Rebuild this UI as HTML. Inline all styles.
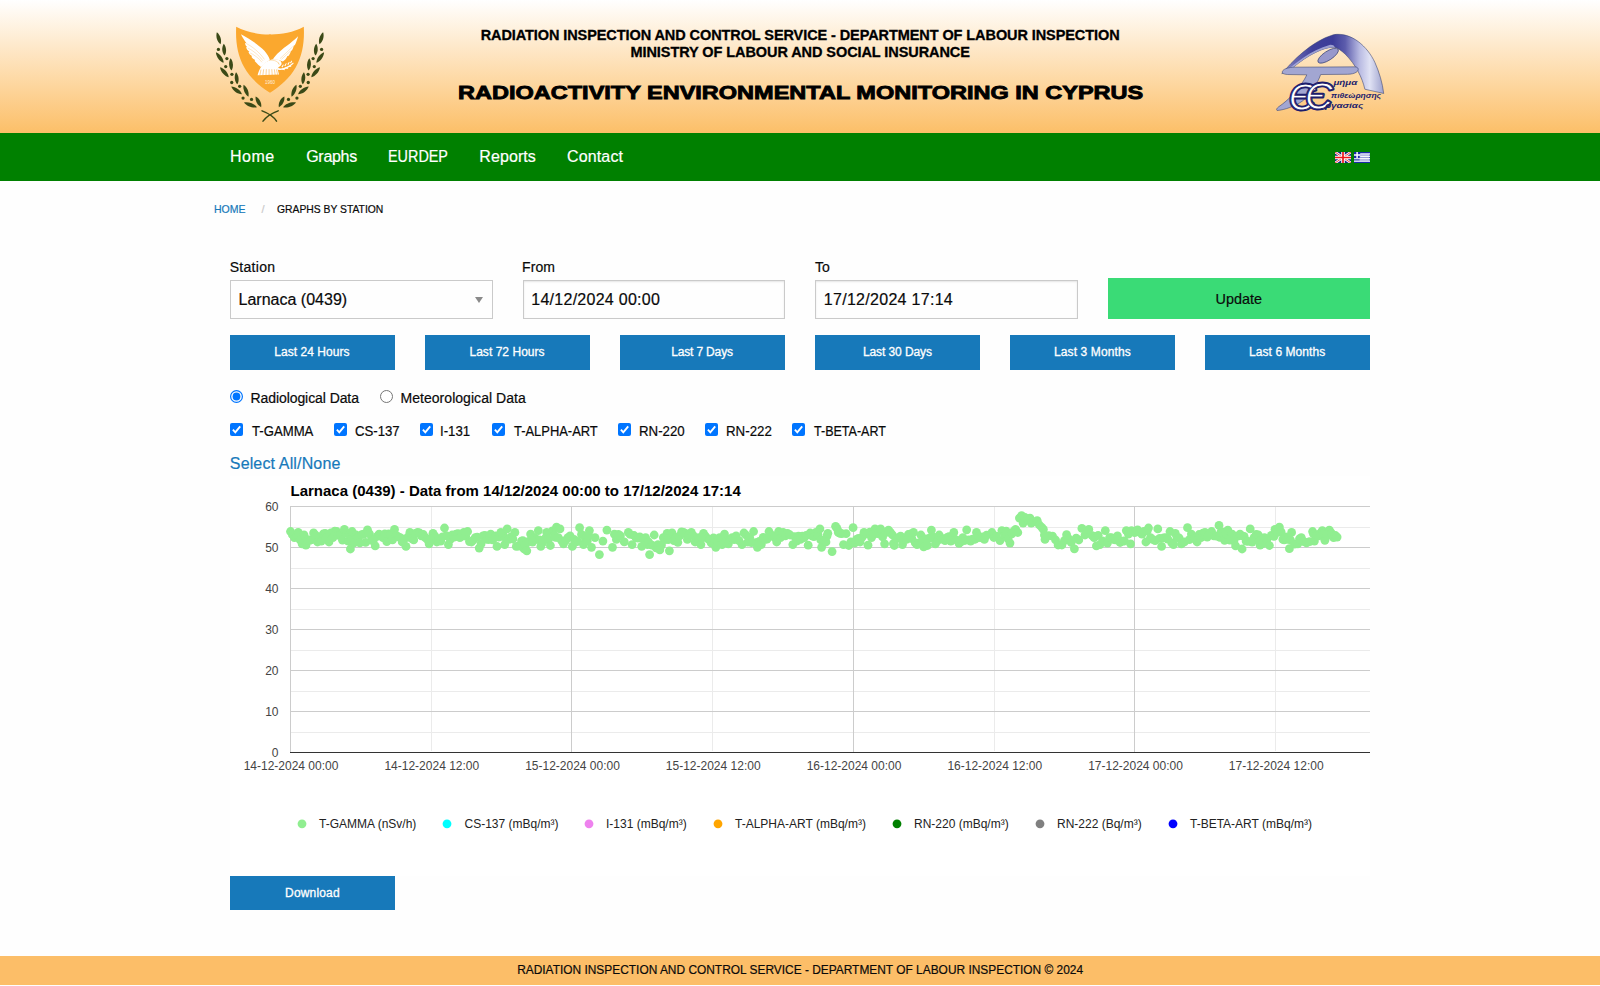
<!DOCTYPE html>
<html lang="en">
<head>
<meta charset="utf-8">
<title>Radioactivity Environmental Monitoring in Cyprus</title>
<style>
*{box-sizing:border-box}
html,body{margin:0;padding:0}
body{width:1600px;height:986px;overflow:hidden;background:#fefefe;font-family:"Liberation Sans",sans-serif;color:#0a0a0a;position:relative}
.abs{position:absolute}
#hdr{left:0;top:0;width:1600px;height:133px;background:linear-gradient(#ffffff,#fcbf68)}
#hdr .l1,#hdr .l2{position:absolute;left:0;width:1600px;text-align:center;font-weight:bold;font-size:14.5px;line-height:17px;color:#000;-webkit-text-stroke:0.3px #000;white-space:nowrap}
#hdr .l1{top:27px}
#hdr .l2{top:44px}
#hdr .ttl{position:absolute;left:0;width:1600px;top:79px;text-align:center;font-weight:bold;font-size:19.2px;line-height:28px;color:#000;white-space:nowrap}
#ttl{display:inline-block;transform:scaleX(1.225);transform-origin:50% 50%;-webkit-text-stroke:0.9px #000;position:relative;left:0.7px}
#nav{left:0;top:133px;width:1600px;height:47.5px;background:#008000}
#nav a{-webkit-text-stroke:0.2px #fff;position:absolute;top:0;line-height:47px;font-size:16px;color:#fff;text-decoration:none;white-space:nowrap}
.bc{top:202px;font-size:11px;line-height:14px;white-space:nowrap}
.lbl,.rl,.inp,.bc,#ftr,#upd,#sel{-webkit-text-stroke:0.2px currentColor}
.lbl{font-size:14px;line-height:18px;color:#0a0a0a;white-space:nowrap}
.inp{height:38.7px;width:262.5px;top:280.2px;border:1px solid #cacaca;background:#fefefe;font-size:16px;line-height:37px;padding-left:8px;color:#0a0a0a;box-shadow:inset 0 1px 2px rgba(10,10,10,.1);white-space:nowrap}
.btn{-webkit-text-stroke:0.3px #fefefe;background:#1779ba;color:#fefefe;text-align:center;white-space:nowrap}
.qb{top:335px;height:34.7px;width:165px;font-size:12px;line-height:34px}
.rl{font-size:14px;line-height:18px;white-space:nowrap;color:#0a0a0a}
#ftr{left:0;top:956px;width:1600px;height:28.6px;background:#fcbe68;text-align:center;font-size:12.6px;line-height:29px;color:#0a0a0a;white-space:nowrap}
</style>
</head>
<body>
<header id="hdr" class="abs">
<svg class="abs" style="left:200px;top:15px" width="140" height="115" viewBox="0 0 1200 986">
<path d="M310 100 C 400 150, 520 168, 600 166 C 680 168, 800 150, 890 100 C 896 230, 880 340, 820 450 C 770 540, 690 610, 600 666 C 510 610, 430 540, 380 450 C 320 340, 304 230, 310 100Z" fill="#fba82e"/>
<g transform="translate(308.6 94.3) scale(0.6085)">
<g fill="#ffffff">
<path d="M70 115 C 180 175, 330 270, 400 350 C 440 400, 465 440, 478 478 L 400 530 L 352 578 L 330 560 L 312 545 L 290 520 L 262 492 L 270 480 L 240 462 L 215 432 L 228 425 L 195 400 L 175 370 L 190 365 L 158 335 L 140 300 L 158 300 L 135 270 L 125 238 L 150 245 C 110 190, 85 150, 70 115Z"/>
<path d="M875 145 C 860 200, 845 240, 828 272 L 815 275 C 810 300, 800 325, 788 345 L 775 348 C 770 370, 755 400, 738 422 L 725 422 C 715 445, 705 460, 695 472 L 660 500 L 600 478 L 520 470 C 560 400, 640 330, 760 245 C 810 205, 850 170, 875 145Z"/>
<path d="M352 578 C 380 530, 440 490, 520 470 C 580 462, 632 480, 642 520 C 647 545, 628 562, 602 576 C 590 590, 586 602, 590 620 L 606 682 L 304 694 C 314 650, 334 610, 352 578Z"/>
<path d="M588 590 C 640 612, 730 585, 805 515 L 812 528 C 740 605, 640 635, 584 612Z"/>
<path d="M640 575 L 665 540 L 672 548 L 655 585Z M680 560 L 705 522 L 713 530 L 696 568Z M722 540 L 748 503 L 756 511 L 738 548Z M760 517 L 784 485 L 792 493 L 775 527Z"/>
<path d="M650 600 L 690 612 L 688 622 L 648 612Z M695 585 L 735 595 L 733 605 L 692 596Z M738 562 L 778 568 L 777 578 L 736 573Z"/>
</g>
<g stroke="#fba82e" fill="none">
<path stroke-width="7" d="M352 615 L 336 694 M390 610 L 378 694 M428 608 L 422 694 M466 608 L 466 694 M504 608 L 510 694 M540 610 L 552 692 M570 612 L 588 690"/>
<path stroke-width="5" d="M470 482 C 540 476, 596 500, 612 548"/>
<path stroke-width="4" d="M150 250 C 230 290, 330 370, 400 470 M165 310 C 240 345, 320 410, 380 490 M200 380 C 260 410, 320 450, 365 510 M800 290 C 740 350, 680 400, 620 460 M765 355 C 720 400, 680 430, 640 470"/>
</g>
<circle cx="600" cy="522" r="6" fill="#fba82e"/>
</g>
<text x="600" y="592" font-family="Liberation Sans, sans-serif" font-size="38" fill="#fff" text-anchor="middle" opacity="0.85">1960</text>
<g fill="#3b4a17"><path transform="translate(160.1 199.2) rotate(-17)" d="M0 -53.5 C 21.7 -23.54, 21.7 26.75, 0 53.5 C -21.7 26.75, -21.7 -23.54, 0 -53.5Z"/><path transform="translate(207 297) rotate(-4)" d="M0 -51.0 C 21.7 -22.44, 21.7 25.5, 0 51.0 C -21.7 25.5, -21.7 -22.44, 0 -51.0Z"/><path transform="translate(169.4 365.1) rotate(-36)" d="M0 -56.0 C 21.7 -24.64, 21.7 28.0, 0 56.0 C -21.7 28.0, -21.7 -24.64, 0 -56.0Z"/><path transform="translate(265.7 423.8) rotate(-4)" d="M0 -53.0 C 21.7 -23.32, 21.7 26.5, 0 53.0 C -21.7 26.5, -21.7 -23.32, 0 -53.0Z"/><path transform="translate(208.6 490.4) rotate(-41)" d="M0 -56.5 C 21.7 -24.86, 21.7 28.25, 0 56.5 C -21.7 28.25, -21.7 -24.86, 0 -56.5Z"/><path transform="translate(314.2 542.8) rotate(-6)" d="M0 -52.0 C 21.7 -22.88, 21.7 26.0, 0 52.0 C -21.7 26.0, -21.7 -22.88, 0 -52.0Z"/><path transform="translate(313.5 646.9) rotate(-54)" d="M0 -56.5 C 21.7 -24.86, 21.7 28.25, 0 56.5 C -21.7 28.25, -21.7 -24.86, 0 -56.5Z"/><path transform="translate(394.1 649.2) rotate(-22)" d="M0 -55.0 C 21.7 -24.2, 21.7 27.5, 0 55.0 C -21.7 27.5, -21.7 -24.2, 0 -55.0Z"/><path transform="translate(432.4 769.8) rotate(-70)" d="M0 -59.5 C 21.7 -26.18, 21.7 29.75, 0 59.5 C -21.7 29.75, -21.7 -26.18, 0 -59.5Z"/><path transform="translate(500.5 744.7) rotate(-27.5)" d="M0 -51.0 C 21.7 -22.44, 21.7 25.5, 0 51.0 C -21.7 25.5, -21.7 -22.44, 0 -51.0Z"/><circle cx="157.7" cy="295.5" r="14"/><circle cx="230.5" cy="373.7" r="14"/><circle cx="220.3" cy="441.8" r="14"/><circle cx="273.5" cy="508.4" r="14"/><circle cx="272" cy="578.8" r="14"/><circle cx="340" cy="611.7" r="14"/><circle cx="369" cy="711.9" r="14"/><circle cx="441.8" cy="723.6" r="14"/></g>
<g fill="#3b4a17" transform="translate(1200 0) scale(-1 1)"><path transform="translate(160.1 199.2) rotate(-17)" d="M0 -53.5 C 21.7 -23.54, 21.7 26.75, 0 53.5 C -21.7 26.75, -21.7 -23.54, 0 -53.5Z"/><path transform="translate(207 297) rotate(-4)" d="M0 -51.0 C 21.7 -22.44, 21.7 25.5, 0 51.0 C -21.7 25.5, -21.7 -22.44, 0 -51.0Z"/><path transform="translate(169.4 365.1) rotate(-36)" d="M0 -56.0 C 21.7 -24.64, 21.7 28.0, 0 56.0 C -21.7 28.0, -21.7 -24.64, 0 -56.0Z"/><path transform="translate(265.7 423.8) rotate(-4)" d="M0 -53.0 C 21.7 -23.32, 21.7 26.5, 0 53.0 C -21.7 26.5, -21.7 -23.32, 0 -53.0Z"/><path transform="translate(208.6 490.4) rotate(-41)" d="M0 -56.5 C 21.7 -24.86, 21.7 28.25, 0 56.5 C -21.7 28.25, -21.7 -24.86, 0 -56.5Z"/><path transform="translate(314.2 542.8) rotate(-6)" d="M0 -52.0 C 21.7 -22.88, 21.7 26.0, 0 52.0 C -21.7 26.0, -21.7 -22.88, 0 -52.0Z"/><path transform="translate(313.5 646.9) rotate(-54)" d="M0 -56.5 C 21.7 -24.86, 21.7 28.25, 0 56.5 C -21.7 28.25, -21.7 -24.86, 0 -56.5Z"/><path transform="translate(394.1 649.2) rotate(-22)" d="M0 -55.0 C 21.7 -24.2, 21.7 27.5, 0 55.0 C -21.7 27.5, -21.7 -24.2, 0 -55.0Z"/><path transform="translate(432.4 769.8) rotate(-70)" d="M0 -59.5 C 21.7 -26.18, 21.7 29.75, 0 59.5 C -21.7 29.75, -21.7 -26.18, 0 -59.5Z"/><path transform="translate(500.5 744.7) rotate(-27.5)" d="M0 -51.0 C 21.7 -22.44, 21.7 25.5, 0 51.0 C -21.7 25.5, -21.7 -22.44, 0 -51.0Z"/><circle cx="157.7" cy="295.5" r="14"/><circle cx="230.5" cy="373.7" r="14"/><circle cx="220.3" cy="441.8" r="14"/><circle cx="273.5" cy="508.4" r="14"/><circle cx="272" cy="578.8" r="14"/><circle cx="340" cy="611.7" r="14"/><circle cx="369" cy="711.9" r="14"/><circle cx="441.8" cy="723.6" r="14"/></g>
<g stroke="#3b4a17" fill="none" stroke-linecap="round"><path d="M532 822 C 580 840, 630 870, 656 910" stroke-width="13"/><path d="M670 822 C 620 840, 570 870, 540 910" stroke-width="13"/></g>
</svg>
<div class="l1"><span id="l1" style="letter-spacing:-0.086px;position:relative;left:0.12px">RADIATION INSPECTION AND CONTROL SERVICE - DEPARTMENT OF LABOUR INSPECTION</span></div>
<div class="l2"><span id="l2" style="letter-spacing:-0.079px;position:relative;left:0.19px">MINISTRY OF LABOUR AND SOCIAL INSURANCE</span></div>
<div class="ttl"><span id="ttl">RADIOACTIVITY ENVIRONMENTAL MONITORING IN CYPRUS</span></div>
<svg class="abs" style="left:1260px;top:20px" width="140" height="105" viewBox="0 0 1315 986">
<defs>
<linearGradient id="ag" gradientUnits="userSpaceOnUse" x1="205" y1="0" x2="1165" y2="0">
<stop offset="0" stop-color="#a4a4d6"/><stop offset="0.12" stop-color="#6868b2"/><stop offset="0.3" stop-color="#40409a"/><stop offset="0.5" stop-color="#3c3c98"/><stop offset="0.62" stop-color="#5c5cac"/><stop offset="0.76" stop-color="#b8bae2"/><stop offset="0.86" stop-color="#e0e2f4"/><stop offset="1" stop-color="#9ca0cc"/>
</linearGradient>
</defs>
<path d="M205 505 C 300 390, 480 200, 690 138 C 860 110, 1010 250, 1080 400 C 1120 490, 1150 590, 1162 690 L 985 650 C 960 540, 900 420, 800 320 C 760 285, 730 262, 700 255 C 600 250, 450 330, 310 445 Z" fill="url(#ag)" stroke="#2e3a6e" stroke-width="5"/>
<path d="M222 498 C 320 415, 470 285, 660 232 C 690 232, 702 242, 700 255 C 600 250, 450 330, 310 445 Z" fill="#b4b6e0" opacity="0.8"/>
<ellipse cx="640" cy="335" rx="112" ry="42" transform="rotate(-33 640 335)" fill="#9898cc" stroke="#2e3a6e" stroke-width="6"/>
<path d="M215 475 C 230 455, 280 445, 320 443 L 890 440 C 925 440, 935 470, 905 490 C 880 505, 860 508, 820 510 L 570 512 C 540 600, 470 700, 400 760 C 330 810, 230 845, 160 850 C 150 840, 160 828, 175 815 C 260 760, 380 640, 440 515 L 260 512 C 215 510, 200 495, 215 475Z" fill="#a2a6d2" stroke="#2e3a6e" stroke-width="5"/>
<g font-family="Liberation Sans, sans-serif" font-style="italic" fill="#1c1c6c" stroke="#1c1c6c" stroke-width="28" stroke-linejoin="round" font-size="349">
<text x="272" y="842" textLength="250" lengthAdjust="spacingAndGlyphs">Є</text>
<text x="425" y="838" textLength="258" lengthAdjust="spacingAndGlyphs">Є</text>
</g>
<g font-family="Liberation Sans, sans-serif" font-style="italic" fill="#ffffff" stroke="#1c1c6c" stroke-width="8" font-size="349">
<text x="272" y="842" textLength="250" lengthAdjust="spacingAndGlyphs">Є</text>
<text x="425" y="838" textLength="258" lengthAdjust="spacingAndGlyphs">Є</text>
</g>
<g font-family="Liberation Sans, sans-serif" font-weight="bold" font-style="italic" fill="#1c1c6c" font-size="62">
<text x="690" y="612" textLength="225" lengthAdjust="spacingAndGlyphs">μήμα</text>
<text x="668" y="728" textLength="470" lengthAdjust="spacingAndGlyphs">πιθεώρησης</text>
<text x="610" y="826" textLength="360" lengthAdjust="spacingAndGlyphs">ργασίας</text>
</g>
</svg>
</header>
<nav id="nav" class="abs">
<a id="n1" style="letter-spacing:0.467px;margin-left:-1.0px;left:231px">Home</a>
<a id="n2" style="letter-spacing:-0.29px;margin-left:0.2px;left:306px">Graphs</a>
<a id="n3" style="letter-spacing:0px;margin-left:-1.34px;display:inline-block;transform:scaleX(0.8992);transform-origin:0 50%;left:389px">EURDEP</a>
<a id="n4" style="letter-spacing:0.067px;margin-left:-0.65px;left:480px">Reports</a>
<a id="n5" style="letter-spacing:0.158px;margin-left:-0.59px;left:567.5px">Contact</a>
<svg class="abs" style="left:1335px;top:19px" width="16" height="11" viewBox="0 0 16 11"><rect width="16" height="11" fill="#1a237b"/><path d="M0 0L16 11M16 0L0 11" stroke="#fff" stroke-width="2.6"/><path d="M0 0L16 11M16 0L0 11" stroke="#e8262b" stroke-width="0.9"/><path d="M8 0V11M0 5.5H16" stroke="#fff" stroke-width="3.6"/><path d="M8 0V11M0 5.5H16" stroke="#f0161c" stroke-width="1.7"/></svg>
<svg class="abs" style="left:1354px;top:19px" width="16" height="11" viewBox="0 0 16 11"><rect width="16" height="11" fill="#1a2aa8"/><g fill="#fff"><rect x="0" y="1.3" width="16" height="1.2"/><rect x="0" y="3.7" width="16" height="1.2"/><rect x="0" y="6.1" width="16" height="1.2"/><rect x="0" y="8.5" width="16" height="1.3"/></g><rect x="0" y="0" width="6.2" height="6.1" fill="#1a2aa8"/><path d="M3.1 0V6.1M0 3.05H6.2" stroke="#fff" stroke-width="1.5"/><rect x="5.6" y="2" width="9.8" height="6.8" fill="#fff" opacity="0.55"/></svg>

</nav>
<div class="abs bc" id="b1" style="letter-spacing:0px;margin-left:-0.6px;display:inline-block;transform:scaleX(0.9563);transform-origin:0 50%;left:215px;color:#1779ba">HOME</div>
<div class="abs bc" style="left:261.6px;color:#cacaca">/</div>
<div class="abs bc" id="b3" style="letter-spacing:0px;margin-left:-0.48px;display:inline-block;transform:scaleX(0.9402);transform-origin:0 50%;left:277.5px;color:#0a0a0a">GRAPHS BY STATION</div>

<label class="abs lbl" id="lb1" style="letter-spacing:0.273px;margin-left:-0.25px;left:230px;top:258px">Station</label>
<label class="abs lbl" id="lb2" style="letter-spacing:0.106px;margin-left:-0.5px;left:522.5px;top:258px">From</label>
<label class="abs lbl" id="lb3" style="letter-spacing:0.0px;margin-left:0.0px;left:815px;top:258px">To</label>
<div class="abs inp" style="left:230px;box-shadow:none"><span id="i1" style="letter-spacing:0.007px;position:relative;left:-0.46px">Larnaca (0439)</span>
<svg class="abs" style="right:8.1px;top:15.9px" width="8" height="6" viewBox="0 0 8 6"><polygon points="0,0 8,0 4,6" fill="#8a8a8a"/></svg></div>
<div class="abs inp" style="left:522.5px"><span id="i2" style="letter-spacing:0.268px;position:relative;left:-0.25px">14/12/2024 00:00</span></div>
<div class="abs inp" style="left:815px"><span id="i3" style="letter-spacing:0.292px;position:relative;left:-0.2px">17/12/2024 17:14</span></div>
<div class="abs" style="left:1107.5px;top:278px;width:262.5px;height:40.7px;background:#3adb76;color:#0a0a0a;text-align:center;font-size:14.4px;line-height:42.6px"><span id="upd" style="letter-spacing:0.0px;position:relative;left:0.0px">Update</span></div>

<div class="abs btn qb" style="left:230px"><span id="q1" style="letter-spacing:0.049px;position:relative;left:-0.6px">Last 24 Hours</span></div>
<div class="abs btn qb" style="left:425px"><span id="q2" style="letter-spacing:0.038px;position:relative;left:-0.46px">Last 72 Hours</span></div>
<div class="abs btn qb" style="left:620px"><span id="q3" style="letter-spacing:-0.15px;position:relative;left:-0.53px">Last 7 Days</span></div>
<div class="abs btn qb" style="left:815px"><span id="q4" style="letter-spacing:-0.084px;position:relative;left:-0.1px">Last 30 Days</span></div>
<div class="abs btn qb" style="left:1010px"><span id="q5" style="letter-spacing:0.111px;position:relative;left:-0.12px">Last 3 Months</span></div>
<div class="abs btn qb" style="left:1205px"><span id="q6" style="letter-spacing:0.074px;position:relative;left:-0.33px">Last 6 Months</span></div>

<svg class="abs" style="left:230px;top:390.4px" width="13" height="13" viewBox="0 0 13 13"><circle cx="6.5" cy="6.5" r="5.9" fill="#fff" stroke="#0075ff" stroke-width="1.2"/><circle cx="6.5" cy="6.5" r="3.9" fill="#0075ff"/></svg>
<div class="abs rl" id="r1" style="letter-spacing:-0.078px;margin-left:-0.91px;left:251.4px;top:389px">Radiological Data</div>
<svg class="abs" style="left:380px;top:390.4px" width="13" height="13" viewBox="0 0 13 13"><circle cx="6.5" cy="6.5" r="6" fill="#fff" stroke="#767676" stroke-width="1"/></svg>
<div class="abs rl" id="r2" style="letter-spacing:0.041px;margin-left:-0.91px;left:401.4px;top:389px">Meteorological Data</div>

<svg class="abs" style="left:230px;top:423.2px" width="13" height="13" viewBox="0 0 13 13"><rect x="0" y="0" width="13" height="13" rx="2" fill="#0075ff"/><path d="M2.9 6.7 L5.3 9.3 L10.2 3.4" fill="none" stroke="#fff" stroke-width="1.9"/></svg>
<div class="abs rl" id="c0" style="letter-spacing:0px;margin-left:0.44px;display:inline-block;transform:scaleX(0.9394);transform-origin:0 50%;left:251.4px;top:422px">T-GAMMA</div>
<svg class="abs" style="left:334px;top:423.2px" width="13" height="13" viewBox="0 0 13 13"><rect x="0" y="0" width="13" height="13" rx="2" fill="#0075ff"/><path d="M2.9 6.7 L5.3 9.3 L10.2 3.4" fill="none" stroke="#fff" stroke-width="1.9"/></svg>
<div class="abs rl" id="c1" style="letter-spacing:0px;margin-left:-0.2px;display:inline-block;transform:scaleX(0.941);transform-origin:0 50%;left:355.4px;top:422px">CS-137</div>
<svg class="abs" style="left:420px;top:423.2px" width="13" height="13" viewBox="0 0 13 13"><rect x="0" y="0" width="13" height="13" rx="2" fill="#0075ff"/><path d="M2.9 6.7 L5.3 9.3 L10.2 3.4" fill="none" stroke="#fff" stroke-width="1.9"/></svg>
<div class="abs rl" id="c2" style="letter-spacing:0px;margin-left:-1.35px;display:inline-block;transform:scaleX(0.9419);transform-origin:0 50%;left:441.4px;top:422px">I-131</div>
<svg class="abs" style="left:492px;top:423.2px" width="13" height="13" viewBox="0 0 13 13"><rect x="0" y="0" width="13" height="13" rx="2" fill="#0075ff"/><path d="M2.9 6.7 L5.3 9.3 L10.2 3.4" fill="none" stroke="#fff" stroke-width="1.9"/></svg>
<div class="abs rl" id="c3" style="letter-spacing:0px;margin-left:0.25px;display:inline-block;transform:scaleX(0.9226);transform-origin:0 50%;left:513.4px;top:422px">T-ALPHA-ART</div>
<svg class="abs" style="left:618px;top:423.2px" width="13" height="13" viewBox="0 0 13 13"><rect x="0" y="0" width="13" height="13" rx="2" fill="#0075ff"/><path d="M2.9 6.7 L5.3 9.3 L10.2 3.4" fill="none" stroke="#fff" stroke-width="1.9"/></svg>
<div class="abs rl" id="c4" style="letter-spacing:0px;margin-left:-0.5px;display:inline-block;transform:scaleX(0.9485);transform-origin:0 50%;left:639.4px;top:422px">RN-220</div>
<svg class="abs" style="left:705px;top:423.2px" width="13" height="13" viewBox="0 0 13 13"><rect x="0" y="0" width="13" height="13" rx="2" fill="#0075ff"/><path d="M2.9 6.7 L5.3 9.3 L10.2 3.4" fill="none" stroke="#fff" stroke-width="1.9"/></svg>
<div class="abs rl" id="c5" style="letter-spacing:0px;margin-left:-0.5px;display:inline-block;transform:scaleX(0.9508);transform-origin:0 50%;left:726.4px;top:422px">RN-222</div>
<svg class="abs" style="left:792px;top:423.2px" width="13" height="13" viewBox="0 0 13 13"><rect x="0" y="0" width="13" height="13" rx="2" fill="#0075ff"/><path d="M2.9 6.7 L5.3 9.3 L10.2 3.4" fill="none" stroke="#fff" stroke-width="1.9"/></svg>
<div class="abs rl" id="c6" style="letter-spacing:0px;margin-left:0.25px;display:inline-block;transform:scaleX(0.8951);transform-origin:0 50%;left:813.4px;top:422px">T-BETA-ART</div>
<div class="abs" style="left:230px;top:455px;font-size:16px;line-height:18px;color:#1779ba;white-space:nowrap"><span id="sel" style="letter-spacing:0.143px;position:relative;left:-0.2px">Select All/None</span></div>

<svg class="abs" style="left:230px;top:476px" width="1140" height="400" viewBox="0 0 1140 400" font-family="Liberation Sans, Arial, sans-serif">
<rect x="0" y="0" width="1140" height="400" fill="#ffffff"/>
<text x="60.5" y="19.6" font-size="15" font-weight="bold" fill="#000">Larnaca (0439) - Data from 14/12/2024 00:00 to 17/12/2024 17:14</text>
<g><rect x="60" y="51" width="1080" height="1" fill="#ebebeb"/><rect x="60" y="92" width="1080" height="1" fill="#ebebeb"/><rect x="60" y="133" width="1080" height="1" fill="#ebebeb"/><rect x="60" y="174" width="1080" height="1" fill="#ebebeb"/><rect x="60" y="215" width="1080" height="1" fill="#ebebeb"/><rect x="60" y="256" width="1080" height="1" fill="#ebebeb"/><rect x="201" y="30" width="1" height="245" fill="#ebebeb"/><rect x="482" y="30" width="1" height="245" fill="#ebebeb"/><rect x="764" y="30" width="1" height="245" fill="#ebebeb"/><rect x="1045" y="30" width="1" height="245" fill="#ebebeb"/><rect x="60" y="30" width="1080" height="1" fill="#cccccc"/><rect x="60" y="71" width="1080" height="1" fill="#cccccc"/><rect x="60" y="112" width="1080" height="1" fill="#cccccc"/><rect x="60" y="153" width="1080" height="1" fill="#cccccc"/><rect x="60" y="194" width="1080" height="1" fill="#cccccc"/><rect x="60" y="235" width="1080" height="1" fill="#cccccc"/><rect x="60" y="30" width="1" height="246" fill="#cccccc"/><rect x="341" y="30" width="1" height="246" fill="#cccccc"/><rect x="623" y="30" width="1" height="246" fill="#cccccc"/><rect x="904" y="30" width="1" height="246" fill="#cccccc"/><rect x="60" y="276" width="1080" height="1" fill="#333333"/></g>
<g fill="#90ee90"><circle cx="60.5" cy="55.5" r="4.4"/><circle cx="62.4" cy="58.7" r="4.4"/><circle cx="64.4" cy="61.6" r="4.4"/><circle cx="66.3" cy="58.9" r="4.4"/><circle cx="68.2" cy="56.4" r="4.4"/><circle cx="70.1" cy="63.8" r="4.4"/><circle cx="72.1" cy="67.8" r="4.4"/><circle cx="74.0" cy="58.8" r="4.4"/><circle cx="75.9" cy="69.2" r="4.4"/><circle cx="77.8" cy="63.7" r="4.4"/><circle cx="79.8" cy="64.3" r="4.4"/><circle cx="81.7" cy="63.7" r="4.4"/><circle cx="83.6" cy="56.9" r="4.4"/><circle cx="85.5" cy="59.1" r="4.4"/><circle cx="87.5" cy="66.0" r="4.4"/><circle cx="89.4" cy="62.7" r="4.4"/><circle cx="91.3" cy="65.1" r="4.4"/><circle cx="93.2" cy="58.0" r="4.4"/><circle cx="95.2" cy="57.3" r="4.4"/><circle cx="97.1" cy="61.3" r="4.4"/><circle cx="99.0" cy="66.0" r="4.4"/><circle cx="100.9" cy="56.9" r="4.4"/><circle cx="102.9" cy="61.6" r="4.4"/><circle cx="104.8" cy="55.1" r="4.4"/><circle cx="106.7" cy="55.5" r="4.4"/><circle cx="108.6" cy="59.4" r="4.4"/><circle cx="110.6" cy="59.0" r="4.4"/><circle cx="112.5" cy="64.2" r="4.4"/><circle cx="114.4" cy="53.4" r="4.4"/><circle cx="116.3" cy="56.9" r="4.4"/><circle cx="118.3" cy="65.1" r="4.4"/><circle cx="119.3" cy="58.3" r="4.4"/><circle cx="120.4" cy="73.0" r="4.4"/><circle cx="121.2" cy="63.3" r="4.4"/><circle cx="122.1" cy="55.5" r="4.4"/><circle cx="124.0" cy="67.0" r="4.4"/><circle cx="126.0" cy="59.0" r="4.4"/><circle cx="127.9" cy="61.7" r="4.4"/><circle cx="129.8" cy="66.9" r="4.4"/><circle cx="131.7" cy="58.7" r="4.4"/><circle cx="133.7" cy="58.1" r="4.4"/><circle cx="135.6" cy="66.3" r="4.4"/><circle cx="137.5" cy="53.8" r="4.4"/><circle cx="139.4" cy="57.8" r="4.4"/><circle cx="141.4" cy="64.3" r="4.4"/><circle cx="143.3" cy="64.2" r="4.4"/><circle cx="145.2" cy="69.9" r="4.4"/><circle cx="147.1" cy="60.3" r="4.4"/><circle cx="149.1" cy="58.1" r="4.4"/><circle cx="151.0" cy="59.9" r="4.4"/><circle cx="152.9" cy="61.6" r="4.4"/><circle cx="154.8" cy="57.8" r="4.4"/><circle cx="156.8" cy="65.7" r="4.4"/><circle cx="158.7" cy="58.0" r="4.4"/><circle cx="160.6" cy="59.0" r="4.4"/><circle cx="162.5" cy="63.9" r="4.4"/><circle cx="164.5" cy="53.4" r="4.4"/><circle cx="166.4" cy="59.7" r="4.4"/><circle cx="168.3" cy="60.8" r="4.4"/><circle cx="170.2" cy="61.7" r="4.4"/><circle cx="172.2" cy="66.0" r="4.4"/><circle cx="174.1" cy="63.1" r="4.4"/><circle cx="176.0" cy="70.4" r="4.4"/><circle cx="177.9" cy="61.1" r="4.4"/><circle cx="179.9" cy="56.4" r="4.4"/><circle cx="181.8" cy="62.6" r="4.4"/><circle cx="183.7" cy="63.9" r="4.4"/><circle cx="185.6" cy="57.5" r="4.4"/><circle cx="187.6" cy="56.4" r="4.4"/><circle cx="189.5" cy="57.0" r="4.4"/><circle cx="191.4" cy="59.9" r="4.4"/><circle cx="193.3" cy="58.5" r="4.4"/><circle cx="195.3" cy="61.6" r="4.4"/><circle cx="197.2" cy="63.1" r="4.4"/><circle cx="199.1" cy="67.8" r="4.4"/><circle cx="201.0" cy="62.3" r="4.4"/><circle cx="203.0" cy="57.3" r="4.4"/><circle cx="204.9" cy="60.0" r="4.4"/><circle cx="206.8" cy="66.0" r="4.4"/><circle cx="208.7" cy="63.6" r="4.4"/><circle cx="210.7" cy="65.1" r="4.4"/><circle cx="212.6" cy="60.9" r="4.4"/><circle cx="214.5" cy="52.0" r="4.4"/><circle cx="216.4" cy="59.7" r="4.4"/><circle cx="218.4" cy="68.6" r="4.4"/><circle cx="220.3" cy="63.4" r="4.4"/><circle cx="222.2" cy="59.0" r="4.4"/><circle cx="224.1" cy="61.1" r="4.4"/><circle cx="226.1" cy="58.1" r="4.4"/><circle cx="228.0" cy="57.6" r="4.4"/><circle cx="229.9" cy="61.6" r="4.4"/><circle cx="231.8" cy="60.1" r="4.4"/><circle cx="233.8" cy="56.4" r="4.4"/><circle cx="235.7" cy="60.1" r="4.4"/><circle cx="237.6" cy="55.5" r="4.4"/><circle cx="239.5" cy="65.6" r="4.4"/><circle cx="241.5" cy="66.0" r="4.4"/><circle cx="243.4" cy="64.0" r="4.4"/><circle cx="245.3" cy="61.6" r="4.4"/><circle cx="247.2" cy="61.2" r="4.4"/><circle cx="249.2" cy="72.1" r="4.4"/><circle cx="251.1" cy="67.8" r="4.4"/><circle cx="253.0" cy="59.9" r="4.4"/><circle cx="254.9" cy="59.4" r="4.4"/><circle cx="256.9" cy="63.4" r="4.4"/><circle cx="258.8" cy="63.5" r="4.4"/><circle cx="260.7" cy="58.1" r="4.4"/><circle cx="262.6" cy="63.9" r="4.4"/><circle cx="264.6" cy="61.6" r="4.4"/><circle cx="265.8" cy="60.0" r="4.4"/><circle cx="267.0" cy="70.4" r="4.4"/><circle cx="268.9" cy="61.2" r="4.4"/><circle cx="270.9" cy="56.4" r="4.4"/><circle cx="272.8" cy="57.6" r="4.4"/><circle cx="274.7" cy="68.6" r="4.4"/><circle cx="275.9" cy="62.4" r="4.4"/><circle cx="277.2" cy="52.9" r="4.4"/><circle cx="279.1" cy="63.3" r="4.4"/><circle cx="281.0" cy="60.8" r="4.4"/><circle cx="282.9" cy="63.0" r="4.4"/><circle cx="284.9" cy="56.4" r="4.4"/><circle cx="286.3" cy="70.4" r="4.4"/><circle cx="288.9" cy="70.1" r="4.4"/><circle cx="291.5" cy="65.1" r="4.4"/><circle cx="292.8" cy="64.6" r="4.4"/><circle cx="294.1" cy="73.0" r="4.4"/><circle cx="295.4" cy="68.9" r="4.4"/><circle cx="296.8" cy="74.8" r="4.4"/><circle cx="298.7" cy="65.4" r="4.4"/><circle cx="300.6" cy="58.1" r="4.4"/><circle cx="302.5" cy="66.1" r="4.4"/><circle cx="304.5" cy="61.6" r="4.4"/><circle cx="306.4" cy="63.4" r="4.4"/><circle cx="308.3" cy="54.6" r="4.4"/><circle cx="309.5" cy="63.8" r="4.4"/><circle cx="310.8" cy="70.4" r="4.4"/><circle cx="312.7" cy="66.6" r="4.4"/><circle cx="314.6" cy="63.4" r="4.4"/><circle cx="315.7" cy="62.0" r="4.4"/><circle cx="316.7" cy="56.4" r="4.4"/><circle cx="318.6" cy="63.1" r="4.4"/><circle cx="320.4" cy="69.5" r="4.4"/><circle cx="322.4" cy="54.8" r="4.4"/><circle cx="324.4" cy="59.0" r="4.4"/><circle cx="325.5" cy="61.3" r="4.4"/><circle cx="326.5" cy="51.1" r="4.4"/><circle cx="328.3" cy="61.6" r="4.4"/><circle cx="330.0" cy="52.9" r="4.4"/><circle cx="331.8" cy="64.9" r="4.4"/><circle cx="333.5" cy="67.8" r="4.4"/><circle cx="335.7" cy="64.5" r="4.4"/><circle cx="337.9" cy="61.6" r="4.4"/><circle cx="340.1" cy="59.8" r="4.4"/><circle cx="342.3" cy="70.4" r="4.4"/><circle cx="344.0" cy="63.3" r="4.4"/><circle cx="345.8" cy="66.0" r="4.4"/><circle cx="347.7" cy="65.4" r="4.4"/><circle cx="349.6" cy="51.7" r="4.4"/><circle cx="351.5" cy="58.4" r="4.4"/><circle cx="353.5" cy="68.6" r="4.4"/><circle cx="355.4" cy="62.5" r="4.4"/><circle cx="357.3" cy="65.1" r="4.4"/><circle cx="358.4" cy="59.2" r="4.4"/><circle cx="359.4" cy="54.6" r="4.4"/><circle cx="361.5" cy="71.3" r="4.4"/><circle cx="365.0" cy="61.6" r="4.4"/><circle cx="369.4" cy="78.6" r="4.4"/><circle cx="372.9" cy="65.1" r="4.4"/><circle cx="376.9" cy="54.1" r="4.4"/><circle cx="382.5" cy="71.3" r="4.4"/><circle cx="384.4" cy="58.2" r="4.4"/><circle cx="386.4" cy="63.4" r="4.4"/><circle cx="388.4" cy="58.3" r="4.4"/><circle cx="390.4" cy="59.9" r="4.4"/><circle cx="394.3" cy="65.9" r="4.4"/><circle cx="398.3" cy="56.4" r="4.4"/><circle cx="400.2" cy="58.4" r="4.4"/><circle cx="402.1" cy="68.6" r="4.4"/><circle cx="404.0" cy="59.5" r="4.4"/><circle cx="406.0" cy="61.6" r="4.4"/><circle cx="407.9" cy="62.2" r="4.4"/><circle cx="409.8" cy="60.8" r="4.4"/><circle cx="411.7" cy="70.3" r="4.4"/><circle cx="413.7" cy="63.4" r="4.4"/><circle cx="415.6" cy="61.6" r="4.4"/><circle cx="417.5" cy="68.6" r="4.4"/><circle cx="418.6" cy="66.0" r="4.4"/><circle cx="419.6" cy="78.6" r="4.4"/><circle cx="421.9" cy="69.1" r="4.4"/><circle cx="424.2" cy="59.0" r="4.4"/><circle cx="426.1" cy="71.8" r="4.4"/><circle cx="428.0" cy="68.6" r="4.4"/><circle cx="428.9" cy="69.4" r="4.4"/><circle cx="429.8" cy="73.9" r="4.4"/><circle cx="431.5" cy="69.1" r="4.4"/><circle cx="433.3" cy="61.6" r="4.4"/><circle cx="435.2" cy="63.5" r="4.4"/><circle cx="437.1" cy="57.3" r="4.4"/><circle cx="438.2" cy="63.6" r="4.4"/><circle cx="439.4" cy="74.8" r="4.4"/><circle cx="440.7" cy="60.7" r="4.4"/><circle cx="442.0" cy="56.9" r="4.4"/><circle cx="443.9" cy="64.6" r="4.4"/><circle cx="445.9" cy="61.6" r="4.4"/><circle cx="447.8" cy="66.3" r="4.4"/><circle cx="449.7" cy="59.9" r="4.4"/><circle cx="451.6" cy="55.9" r="4.4"/><circle cx="453.6" cy="56.4" r="4.4"/><circle cx="455.5" cy="57.7" r="4.4"/><circle cx="457.4" cy="63.4" r="4.4"/><circle cx="459.3" cy="58.2" r="4.4"/><circle cx="461.3" cy="56.4" r="4.4"/><circle cx="463.2" cy="59.7" r="4.4"/><circle cx="465.1" cy="66.0" r="4.4"/><circle cx="467.0" cy="62.1" r="4.4"/><circle cx="469.0" cy="61.6" r="4.4"/><circle cx="469.9" cy="62.9" r="4.4"/><circle cx="470.9" cy="68.6" r="4.4"/><circle cx="472.2" cy="61.7" r="4.4"/><circle cx="473.5" cy="57.3" r="4.4"/><circle cx="475.4" cy="60.2" r="4.4"/><circle cx="477.4" cy="62.5" r="4.4"/><circle cx="479.3" cy="64.0" r="4.4"/><circle cx="481.2" cy="66.9" r="4.4"/><circle cx="483.5" cy="61.8" r="4.4"/><circle cx="485.8" cy="71.3" r="4.4"/><circle cx="487.7" cy="65.3" r="4.4"/><circle cx="489.6" cy="61.6" r="4.4"/><circle cx="492.1" cy="68.6" r="4.4"/><circle cx="494.5" cy="58.1" r="4.4"/><circle cx="496.4" cy="65.1" r="4.4"/><circle cx="498.4" cy="67.8" r="4.4"/><circle cx="500.3" cy="63.1" r="4.4"/><circle cx="502.2" cy="61.6" r="4.4"/><circle cx="504.1" cy="63.6" r="4.4"/><circle cx="506.1" cy="59.9" r="4.4"/><circle cx="509.0" cy="64.7" r="4.4"/><circle cx="512.0" cy="68.6" r="4.4"/><circle cx="513.9" cy="57.0" r="4.4"/><circle cx="515.9" cy="59.0" r="4.4"/><circle cx="517.8" cy="66.2" r="4.4"/><circle cx="519.7" cy="61.6" r="4.4"/><circle cx="521.6" cy="66.6" r="4.4"/><circle cx="523.6" cy="55.5" r="4.4"/><circle cx="525.5" cy="66.6" r="4.4"/><circle cx="527.4" cy="71.3" r="4.4"/><circle cx="529.3" cy="65.3" r="4.4"/><circle cx="531.3" cy="68.6" r="4.4"/><circle cx="533.2" cy="61.4" r="4.4"/><circle cx="535.1" cy="63.4" r="4.4"/><circle cx="537.0" cy="63.2" r="4.4"/><circle cx="539.0" cy="55.5" r="4.4"/><circle cx="540.9" cy="58.9" r="4.4"/><circle cx="542.8" cy="59.9" r="4.4"/><circle cx="544.7" cy="61.7" r="4.4"/><circle cx="546.7" cy="66.0" r="4.4"/><circle cx="548.6" cy="55.5" r="4.4"/><circle cx="550.5" cy="61.6" r="4.4"/><circle cx="551.8" cy="57.7" r="4.4"/><circle cx="553.1" cy="56.4" r="4.4"/><circle cx="555.3" cy="59.9" r="4.4"/><circle cx="557.5" cy="57.3" r="4.4"/><circle cx="560.1" cy="59.0" r="4.4"/><circle cx="562.8" cy="68.6" r="4.4"/><circle cx="564.7" cy="60.6" r="4.4"/><circle cx="566.6" cy="65.1" r="4.4"/><circle cx="568.5" cy="60.2" r="4.4"/><circle cx="570.5" cy="63.4" r="4.4"/><circle cx="572.4" cy="60.1" r="4.4"/><circle cx="574.3" cy="61.6" r="4.4"/><circle cx="576.2" cy="59.5" r="4.4"/><circle cx="578.2" cy="69.2" r="4.4"/><circle cx="580.1" cy="57.0" r="4.4"/><circle cx="582.0" cy="59.9" r="4.4"/><circle cx="583.9" cy="60.6" r="4.4"/><circle cx="585.9" cy="56.4" r="4.4"/><circle cx="587.9" cy="58.3" r="4.4"/><circle cx="589.9" cy="52.9" r="4.4"/><circle cx="590.8" cy="64.0" r="4.4"/><circle cx="591.6" cy="71.3" r="4.4"/><circle cx="593.8" cy="64.3" r="4.4"/><circle cx="596.0" cy="66.0" r="4.4"/><circle cx="596.9" cy="60.2" r="4.4"/><circle cx="597.8" cy="57.3" r="4.4"/><circle cx="602.1" cy="75.6" r="4.4"/><circle cx="605.6" cy="50.3" r="4.4"/><circle cx="607.0" cy="52.3" r="4.4"/><circle cx="608.3" cy="56.4" r="4.4"/><circle cx="609.1" cy="56.2" r="4.4"/><circle cx="610.0" cy="57.3" r="4.4"/><circle cx="611.8" cy="57.7" r="4.4"/><circle cx="613.5" cy="68.6" r="4.4"/><circle cx="616.1" cy="57.7" r="4.4"/><circle cx="618.8" cy="69.5" r="4.4"/><circle cx="620.9" cy="65.9" r="4.4"/><circle cx="623.1" cy="51.7" r="4.4"/><circle cx="624.9" cy="67.0" r="4.4"/><circle cx="626.6" cy="63.4" r="4.4"/><circle cx="628.4" cy="62.4" r="4.4"/><circle cx="630.1" cy="66.0" r="4.4"/><circle cx="632.1" cy="61.2" r="4.4"/><circle cx="634.0" cy="56.4" r="4.4"/><circle cx="636.0" cy="57.8" r="4.4"/><circle cx="638.0" cy="69.2" r="4.4"/><circle cx="639.8" cy="56.2" r="4.4"/><circle cx="641.5" cy="61.6" r="4.4"/><circle cx="643.3" cy="58.7" r="4.4"/><circle cx="645.0" cy="52.9" r="4.4"/><circle cx="647.8" cy="57.6" r="4.4"/><circle cx="650.6" cy="52.9" r="4.4"/><circle cx="652.6" cy="61.0" r="4.4"/><circle cx="654.6" cy="67.8" r="4.4"/><circle cx="656.6" cy="56.3" r="4.4"/><circle cx="658.5" cy="54.1" r="4.4"/><circle cx="660.5" cy="56.5" r="4.4"/><circle cx="662.5" cy="59.0" r="4.4"/><circle cx="663.4" cy="67.5" r="4.4"/><circle cx="664.3" cy="69.5" r="4.4"/><circle cx="666.4" cy="63.0" r="4.4"/><circle cx="668.6" cy="61.6" r="4.4"/><circle cx="670.6" cy="60.2" r="4.4"/><circle cx="672.5" cy="68.6" r="4.4"/><circle cx="674.5" cy="63.3" r="4.4"/><circle cx="676.5" cy="63.4" r="4.4"/><circle cx="678.3" cy="58.5" r="4.4"/><circle cx="680.0" cy="58.1" r="4.4"/><circle cx="681.8" cy="62.6" r="4.4"/><circle cx="683.5" cy="56.4" r="4.4"/><circle cx="685.3" cy="67.0" r="4.4"/><circle cx="687.0" cy="68.6" r="4.4"/><circle cx="688.9" cy="67.0" r="4.4"/><circle cx="690.9" cy="59.0" r="4.4"/><circle cx="692.3" cy="64.9" r="4.4"/><circle cx="693.7" cy="70.9" r="4.4"/><circle cx="695.6" cy="62.8" r="4.4"/><circle cx="697.5" cy="69.5" r="4.4"/><circle cx="699.4" cy="62.2" r="4.4"/><circle cx="701.4" cy="54.1" r="4.4"/><circle cx="703.4" cy="61.1" r="4.4"/><circle cx="705.4" cy="67.8" r="4.4"/><circle cx="707.3" cy="65.0" r="4.4"/><circle cx="709.2" cy="59.0" r="4.4"/><circle cx="711.2" cy="62.1" r="4.4"/><circle cx="713.1" cy="63.4" r="4.4"/><circle cx="715.0" cy="64.7" r="4.4"/><circle cx="716.9" cy="61.6" r="4.4"/><circle cx="718.9" cy="60.6" r="4.4"/><circle cx="720.8" cy="65.1" r="4.4"/><circle cx="722.3" cy="60.1" r="4.4"/><circle cx="723.8" cy="56.4" r="4.4"/><circle cx="726.4" cy="63.8" r="4.4"/><circle cx="729.0" cy="67.4" r="4.4"/><circle cx="730.9" cy="65.9" r="4.4"/><circle cx="732.9" cy="61.6" r="4.4"/><circle cx="734.8" cy="64.5" r="4.4"/><circle cx="736.7" cy="53.8" r="4.4"/><circle cx="738.6" cy="64.0" r="4.4"/><circle cx="740.6" cy="65.1" r="4.4"/><circle cx="742.5" cy="63.2" r="4.4"/><circle cx="744.4" cy="63.4" r="4.4"/><circle cx="745.5" cy="62.8" r="4.4"/><circle cx="746.5" cy="56.4" r="4.4"/><circle cx="748.3" cy="60.5" r="4.4"/><circle cx="750.0" cy="61.6" r="4.4"/><circle cx="752.2" cy="61.0" r="4.4"/><circle cx="754.4" cy="63.4" r="4.4"/><circle cx="756.6" cy="59.2" r="4.4"/><circle cx="862.2" cy="59.7" r="4.4"/><circle cx="864.1" cy="61.6" r="4.4"/><circle cx="865.3" cy="60.5" r="4.4"/><circle cx="866.4" cy="69.9" r="4.4"/><circle cx="868.2" cy="59.3" r="4.4"/><circle cx="870.0" cy="68.6" r="4.4"/><circle cx="872.6" cy="65.0" r="4.4"/><circle cx="875.3" cy="54.6" r="4.4"/><circle cx="877.4" cy="67.1" r="4.4"/><circle cx="879.6" cy="61.6" r="4.4"/><circle cx="881.4" cy="61.7" r="4.4"/><circle cx="883.1" cy="63.4" r="4.4"/><circle cx="885.3" cy="63.8" r="4.4"/><circle cx="887.5" cy="59.9" r="4.4"/><circle cx="890.1" cy="66.5" r="4.4"/><circle cx="892.8" cy="65.1" r="4.4"/><circle cx="894.5" cy="65.0" r="4.4"/><circle cx="896.3" cy="54.6" r="4.4"/><circle cx="898.4" cy="58.1" r="4.4"/><circle cx="900.6" cy="67.8" r="4.4"/><circle cx="901.5" cy="54.6" r="4.4"/><circle cx="904.6" cy="56.6" r="4.4"/><circle cx="907.6" cy="53.8" r="4.4"/><circle cx="909.8" cy="56.3" r="4.4"/><circle cx="912.0" cy="58.1" r="4.4"/><circle cx="913.9" cy="55.3" r="4.4"/><circle cx="915.9" cy="66.0" r="4.4"/><circle cx="917.2" cy="55.0" r="4.4"/><circle cx="918.5" cy="52.0" r="4.4"/><circle cx="920.5" cy="61.6" r="4.4"/><circle cx="922.5" cy="63.4" r="4.4"/><circle cx="925.1" cy="64.6" r="4.4"/><circle cx="927.8" cy="52.9" r="4.4"/><circle cx="929.7" cy="62.4" r="4.4"/><circle cx="931.6" cy="70.4" r="4.4"/><circle cx="933.6" cy="61.9" r="4.4"/><circle cx="935.6" cy="61.6" r="4.4"/><circle cx="937.8" cy="63.1" r="4.4"/><circle cx="940.0" cy="55.5" r="4.4"/><circle cx="941.8" cy="66.9" r="4.4"/><circle cx="943.5" cy="68.6" r="4.4"/><circle cx="945.3" cy="57.4" r="4.4"/><circle cx="947.0" cy="61.6" r="4.4"/><circle cx="949.2" cy="62.0" r="4.4"/><circle cx="951.4" cy="67.8" r="4.4"/><circle cx="954.4" cy="66.0" r="4.4"/><circle cx="957.5" cy="51.7" r="4.4"/><circle cx="959.4" cy="63.7" r="4.4"/><circle cx="961.4" cy="58.1" r="4.4"/><circle cx="964.2" cy="62.5" r="4.4"/><circle cx="967.1" cy="66.0" r="4.4"/><circle cx="969.1" cy="58.5" r="4.4"/><circle cx="971.0" cy="61.6" r="4.4"/><circle cx="973.0" cy="57.1" r="4.4"/><circle cx="975.0" cy="56.4" r="4.4"/><circle cx="977.2" cy="61.2" r="4.4"/><circle cx="979.4" cy="58.1" r="4.4"/><circle cx="981.6" cy="55.5" r="4.4"/><circle cx="983.8" cy="59.9" r="4.4"/><circle cx="986.4" cy="60.1" r="4.4"/><circle cx="989.0" cy="49.4" r="4.4"/><circle cx="989.9" cy="61.3" r="4.4"/><circle cx="990.8" cy="56.4" r="4.4"/><circle cx="992.7" cy="56.1" r="4.4"/><circle cx="994.6" cy="64.3" r="4.4"/><circle cx="996.2" cy="57.8" r="4.4"/><circle cx="997.8" cy="54.1" r="4.4"/><circle cx="999.9" cy="64.2" r="4.4"/><circle cx="1002.1" cy="58.1" r="4.4"/><circle cx="1003.9" cy="64.9" r="4.4"/><circle cx="1005.6" cy="69.9" r="4.4"/><circle cx="1007.8" cy="60.1" r="4.4"/><circle cx="1010.0" cy="58.1" r="4.4"/><circle cx="1011.1" cy="59.5" r="4.4"/><circle cx="1012.1" cy="73.0" r="4.4"/><circle cx="1014.1" cy="60.3" r="4.4"/><circle cx="1016.1" cy="65.1" r="4.4"/><circle cx="1018.1" cy="65.3" r="4.4"/><circle cx="1020.2" cy="52.9" r="4.4"/><circle cx="1022.1" cy="66.2" r="4.4"/><circle cx="1024.0" cy="61.6" r="4.4"/><circle cx="1026.2" cy="58.4" r="4.4"/><circle cx="1028.4" cy="59.0" r="4.4"/><circle cx="1029.3" cy="65.2" r="4.4"/><circle cx="1030.1" cy="69.2" r="4.4"/><circle cx="1032.3" cy="67.8" r="4.4"/><circle cx="1034.5" cy="61.6" r="4.4"/><circle cx="1037.0" cy="63.5" r="4.4"/><circle cx="1039.4" cy="69.5" r="4.4"/><circle cx="1041.3" cy="59.4" r="4.4"/><circle cx="1043.3" cy="59.9" r="4.4"/><circle cx="1044.1" cy="60.3" r="4.4"/><circle cx="1045.0" cy="53.4" r="4.4"/><circle cx="1047.2" cy="56.4" r="4.4"/><circle cx="1049.4" cy="51.1" r="4.4"/><circle cx="1051.1" cy="55.8" r="4.4"/><circle cx="1052.9" cy="63.4" r="4.4"/><circle cx="1054.2" cy="63.9" r="4.4"/><circle cx="1055.5" cy="60.8" r="4.4"/><circle cx="1057.4" cy="63.4" r="4.4"/><circle cx="1059.4" cy="72.7" r="4.4"/><circle cx="1060.5" cy="64.0" r="4.4"/><circle cx="1061.6" cy="56.4" r="4.4"/><circle cx="1064.7" cy="68.2" r="4.4"/><circle cx="1067.8" cy="67.8" r="4.4"/><circle cx="1069.5" cy="62.9" r="4.4"/><circle cx="1071.3" cy="61.6" r="4.4"/><circle cx="1073.9" cy="65.6" r="4.4"/><circle cx="1076.5" cy="66.9" r="4.4"/><circle cx="1079.6" cy="65.7" r="4.4"/><circle cx="1082.6" cy="55.5" r="4.4"/><circle cx="1083.5" cy="58.0" r="4.4"/><circle cx="1084.4" cy="65.1" r="4.4"/><circle cx="1086.6" cy="58.8" r="4.4"/><circle cx="1088.8" cy="59.9" r="4.4"/><circle cx="1090.5" cy="57.1" r="4.4"/><circle cx="1092.3" cy="54.6" r="4.4"/><circle cx="1093.6" cy="57.6" r="4.4"/><circle cx="1094.9" cy="64.3" r="4.4"/><circle cx="1097.1" cy="60.0" r="4.4"/><circle cx="1099.3" cy="54.1" r="4.4"/><circle cx="1101.4" cy="57.0" r="4.4"/><circle cx="1103.6" cy="61.6" r="4.4"/><circle cx="1105.4" cy="59.5" r="4.4"/><circle cx="1107.1" cy="61.1" r="4.4"/><circle cx="761.9" cy="56.5" r="4.4"/><circle cx="763.8" cy="61.5" r="4.4"/><circle cx="766.2" cy="60.2" r="4.4"/><circle cx="770.0" cy="64.6" r="4.4"/><circle cx="771.9" cy="54.6" r="4.4"/><circle cx="774.4" cy="59.0" r="4.4"/><circle cx="776.2" cy="55.2" r="4.4"/><circle cx="778.1" cy="62.8" r="4.4"/><circle cx="780.0" cy="67.1" r="4.4"/><circle cx="781.9" cy="57.8" r="4.4"/><circle cx="783.8" cy="55.2" r="4.4"/><circle cx="785.6" cy="53.4" r="4.4"/><circle cx="787.8" cy="56.5" r="4.4"/><circle cx="789.4" cy="42.1" r="4.4"/><circle cx="791.6" cy="39.6" r="4.4"/><circle cx="793.1" cy="47.1" r="4.4"/><circle cx="795.0" cy="41.5" r="4.4"/><circle cx="797.5" cy="42.8" r="4.4"/><circle cx="800.0" cy="42.1" r="4.4"/><circle cx="801.2" cy="47.1" r="4.4"/><circle cx="803.8" cy="45.9" r="4.4"/><circle cx="807.2" cy="44.6" r="4.4"/><circle cx="809.4" cy="49.0" r="4.4"/><circle cx="811.9" cy="51.5" r="4.4"/><circle cx="813.4" cy="53.4" r="4.4"/><circle cx="814.4" cy="59.0" r="4.4"/><circle cx="815.0" cy="63.4" r="4.4"/><circle cx="818.8" cy="59.6" r="4.4"/><circle cx="822.5" cy="60.2" r="4.4"/><circle cx="825.6" cy="64.0" r="4.4"/><circle cx="828.1" cy="69.0" r="4.4"/><circle cx="831.9" cy="69.0" r="4.4"/><circle cx="834.4" cy="64.6" r="4.4"/><circle cx="836.6" cy="58.7" r="4.4"/><circle cx="838.8" cy="62.8" r="4.4"/><circle cx="841.2" cy="66.5" r="4.4"/><circle cx="844.4" cy="72.8" r="4.4"/><circle cx="846.2" cy="62.1" r="4.4"/><circle cx="848.8" cy="64.0" r="4.4"/><circle cx="851.9" cy="52.4" r="4.4"/><circle cx="855.0" cy="59.0" r="4.4"/><circle cx="858.8" cy="53.4" r="4.4"/></g>
<g font-size="12" fill="#444444"><text x="48.5" y="280.7" text-anchor="end">0</text><text x="48.5" y="239.7" text-anchor="end">10</text><text x="48.5" y="198.7" text-anchor="end">20</text><text x="48.5" y="157.7" text-anchor="end">30</text><text x="48.5" y="116.7" text-anchor="end">40</text><text x="48.5" y="75.7" text-anchor="end">50</text><text x="48.5" y="34.7" text-anchor="end">60</text></g>
<g font-size="12" fill="#444444"><text x="61.0" y="294.2" text-anchor="middle">14-12-2024 00:00</text><text x="201.8" y="294.2" text-anchor="middle">14-12-2024 12:00</text><text x="342.5" y="294.2" text-anchor="middle">15-12-2024 00:00</text><text x="483.2" y="294.2" text-anchor="middle">15-12-2024 12:00</text><text x="624.0" y="294.2" text-anchor="middle">16-12-2024 00:00</text><text x="764.8" y="294.2" text-anchor="middle">16-12-2024 12:00</text><text x="905.5" y="294.2" text-anchor="middle">17-12-2024 00:00</text><text x="1046.2" y="294.2" text-anchor="middle">17-12-2024 12:00</text></g>
<g font-size="12" fill="#222222"><circle cx="72" cy="347.8" r="4.4" fill="#90ee90"/><text x="89" y="352.2">T-GAMMA (nSv/h)</text><circle cx="217" cy="347.8" r="4.4" fill="#00ffff"/><text x="234.5" y="352.2">CS-137 (mBq/m³)</text><circle cx="359" cy="347.8" r="4.4" fill="#ee82ee"/><text x="376" y="352.2">I-131 (mBq/m³)</text><circle cx="488" cy="347.8" r="4.4" fill="#ffa500"/><text x="505" y="352.2">T-ALPHA-ART (mBq/m³)</text><circle cx="667" cy="347.8" r="4.4" fill="#008000"/><text x="684" y="352.2">RN-220 (mBq/m³)</text><circle cx="810" cy="347.8" r="4.4" fill="#808080"/><text x="827" y="352.2">RN-222 (Bq/m³)</text><circle cx="943" cy="347.8" r="4.4" fill="#0000ff"/><text x="960" y="352.2">T-BETA-ART (mBq/m³)</text></g>
</svg>

<div class="abs btn" style="left:230px;top:876px;width:165px;height:34.3px;font-size:12px;line-height:34px"><span id="dl" style="letter-spacing:0.166px;position:relative;left:-0.1px">Download</span></div>
<footer id="ftr" class="abs"><span id="ft" style="letter-spacing:0px;position:relative;left:-0.1px;display:inline-block;transform:scaleX(0.946);transform-origin:50% 50%">RADIATION INSPECTION AND CONTROL SERVICE - DEPARTMENT OF LABOUR INSPECTION © 2024</span></footer>
</body>
</html>
